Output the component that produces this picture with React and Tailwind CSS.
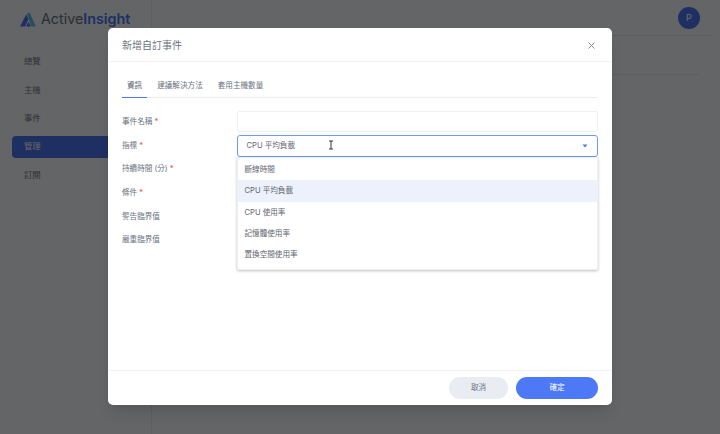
import React from 'react';
import { X } from 'lucide-react';

const navItems = ['總覽', '主機', '事件', '管理', '訂閱'];
const tabs = ['資訊', '建議解決方法', '套用主機數量'];
const options = ['斷線時間', 'CPU 平均負載', 'CPU 使用率', '記憶體使用率', '置換空間使用率'];
const fields = [
  { label: '事件名稱', required: true },
  { label: '指標', required: true },
  { label: '持續時間 (分)', required: true },
  { label: '條件', required: true },
  { label: '警告臨界值' },
  { label: '嚴重臨界值' },
];

const Logo = () => (
  <div className="flex items-center gap-[5px]">
    <svg width="16" height="15" viewBox="0 0 16 15">
      <path d="M0 14.5 L6.2 2.5 L8.6 7 L5 14.5 Z" fill="#4d79f6" />
      <path d="M6.8 1.5 L9.6 0.5 L16 14.5 L11.4 14.5 Z" fill="#5fc4e8" />
      <path d="M6 14.5 L8.6 9.4 L10.8 14.5 Z" fill="#4d79f6" />
    </svg>
    <span className="text-[14.3px] leading-none text-[#6f7480]">
      Active<span className="font-semibold text-[#4d79f6]">Insight</span>
    </span>
  </div>
);

const App = () => {
  return (
    <div className="relative flex h-[434px] w-[720px] overflow-hidden bg-[#f8fcff] text-[7.6px] font-['Inter','Noto_Sans_CJK_TC',sans-serif]">
      {/* sidebar */}
      <aside className="flex w-[152px] shrink-0 flex-col border-r border-[#e8ecf0] pl-[12px]">
        <div className="flex h-[38px] items-center pl-[8px]">
          <Logo />
        </div>
        <nav className="mt-[12.7px] flex flex-col gap-[6.3px]">
          {navItems.map((item) => (
            <div
              key={item}
              className={`flex h-[22px] items-center rounded-l-[4px] pl-[12px] text-[8.4px] ${
                item === '管理' ? 'bg-[#4d79f6] text-white' : 'text-[#7b818c]'
              }`}
            >
              {item}
            </div>
          ))}
        </nav>
      </aside>

      {/* page behind the dialog */}
      <main className="flex-1">
        <div className="mr-[9px] flex h-[36px] items-center justify-end border-b border-[#e4e8ec] pr-[11px]">
          <div className="flex h-[22px] w-[22px] items-center justify-center rounded-full bg-[#4d79f6] text-[9px] font-medium text-white">
            P
          </div>
        </div>
        <div className="mr-[21px] h-[39px] border-b border-[#e4e8ec]" />
      </main>

      {/* overlay + dialog */}
      <div className="absolute inset-0 bg-black/60 pt-[28px] pl-[108px]">
        <div className="flex h-[377px] w-[504px] flex-col rounded-[5px] bg-white shadow-lg">
          <div className="flex h-[34px] items-center justify-between border-b border-[#f1f3f6] pl-[14px] pr-[15px] pt-[1px]">
            <span className="text-[10px] text-[#6b7280]">新增自訂事件</span>
            <X size={11} strokeWidth={2} className="text-[#7b8087]" />
          </div>

          <div className="flex-1 px-[14px] pt-[12px]">
            {/* tabs */}
            <div className="flex h-[24px] gap-[5px] border-b border-[#e9ecf1]">
              {tabs.map((tab, i) => (
                <div
                  key={tab}
                  className={`flex h-[24px] items-center px-[5px] ${
                    i === 0 ? 'border-b-[1.5px] border-[#4d79f6] text-[#4b5563]' : 'text-[#6b7280]'
                  }`}
                >
                  {tab}
                </div>
              ))}
            </div>

            {/* form */}
            <div className="relative mt-[13px] flex">
              <div className="flex w-[114.5px] shrink-0 flex-col gap-[5.8px] pt-[2px]">
                {fields.map((f) => (
                  <div key={f.label} className="flex h-[17.8px] items-center gap-[2px] text-[#6b7280]">
                    <span>{f.label}</span>
                    {f.required && <span className="text-[#ef4444]">*</span>}
                  </div>
                ))}
              </div>

              <div className="flex flex-1 flex-col gap-[3px]">
                <div className="h-[21px] rounded-[2px] border border-[#eef1f5] bg-white" />
                <div className="flex h-[21.5px] items-center justify-between rounded-[3px] border border-[#6f98fb] pl-[9px] pr-[9px] text-[#5f6670]">
                  <span>CPU 平均負載</span>
                  <svg width="6" height="4" viewBox="0 0 6 4">
                    <path d="M0.5 0.5 H5.5 L3 3.5 Z" fill="#4d79f6" />
                  </svg>
                </div>
              </div>

              {/* cursor */}
              <svg width="6" height="10" viewBox="0 0 6 10" className="absolute left-[206px] top-[29px]">
                <path d="M1 1 H5 M3 1 V9 M1 9 H5" stroke="#333" strokeWidth="1" fill="none" />
              </svg>

              {/* dropdown */}
              <div className="absolute left-[115px] top-[46px] w-[361px] rounded-b-[2px] border border-[#edf0f4] bg-white pt-[1px] pb-[4px] shadow-[0_1px_3px_rgba(0,0,0,0.25)]">
                {options.map((o) => (
                  <div
                    key={o}
                    className={`flex h-[21.3px] items-center pl-[6.5px] text-[#5f6670] ${
                      o === 'CPU 平均負載' ? 'bg-[#edf1fb]' : ''
                    }`}
                  >
                    {o}
                  </div>
                ))}
              </div>
            </div>
          </div>

          <div className="flex h-[35px] items-start justify-end gap-[8px] border-t border-[#f1f3f6] pr-[14px] pt-[6px]">
            <button className="h-[22px] w-[59px] rounded-full bg-[#e9ecf3] text-[#6b7280]">取消</button>
            <button className="h-[22px] w-[82px] rounded-full bg-[#4d79f6] text-white">確定</button>
          </div>
        </div>
      </div>
    </div>
  );
};

export default App;
